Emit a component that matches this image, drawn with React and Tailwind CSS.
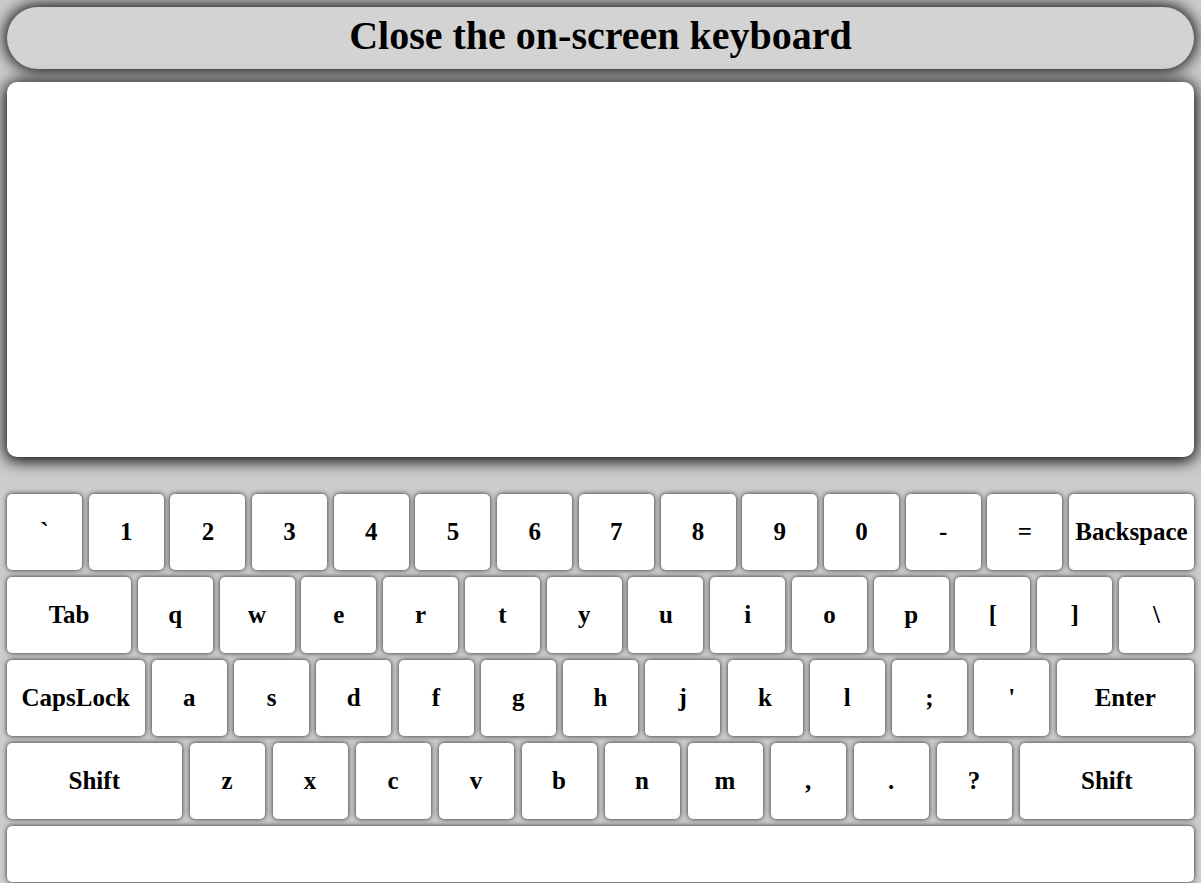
import React from 'react';

const serif = { fontFamily: '"Liberation Serif", "Times New Roman", serif' };

function Key({ label, wide }) {
  return (
    <button
      className={`${wide ? 'flex-1' : 'w-[75px] shrink-0'} h-[76px] bg-white rounded-[5px] shadow-[0_0_5px_#222] flex items-center justify-center text-[25px] font-bold text-black`}
    >
      {label}
    </button>
  );
}

const row1 = ['`', '1', '2', '3', '4', '5', '6', '7', '8', '9', '0', '-', '='];
const row2 = ['q', 'w', 'e', 'r', 't', 'y', 'u', 'i', 'o', 'p', '[', ']', '\\'];
const row3 = ['a', 's', 'd', 'f', 'g', 'h', 'j', 'k', 'l', ';', "'"];
const row4 = ['z', 'x', 'c', 'v', 'b', 'n', 'm', ',', '.', '?'];

export default function App() {
  return (
    <div className="min-h-screen bg-[#cccccc] p-[7px] pb-0 overflow-hidden" style={serif}>
      {/* header */}
      <div className="h-[62px] rounded-full bg-[#d3d3d3] shadow-[0_0_16px_2px_#000] flex items-center justify-center pb-[4px]">
        <h1 className="text-[40px] font-bold text-black leading-none">Close the on-screen keyboard</h1>
      </div>

      {/* text area */}
      <textarea
        className="block w-full mt-[13px] h-[375px] bg-white rounded-[10px] shadow-[0_2px_16px_2px_#000] resize-none outline-none border-0 p-2 text-[20px]"
      />

      {/* keyboard */}
      <div className="mt-[37px] flex flex-col gap-[7px]">
        <div className="flex gap-[6.7px]">
          {row1.map((k) => <Key key={k} label={k} />)}
          <Key label="Backspace" wide />
        </div>
        <div className="flex gap-[6.77px]">
          <Key label="Tab" wide />
          {row2.map((k) => <Key key={k} label={k} />)}
        </div>
        <div className="flex gap-[7.25px]">
          <Key label="CapsLock" wide />
          {row3.map((k) => <Key key={k} label={k} />)}
          <Key label="Enter" wide />
        </div>
        <div className="flex gap-[8px]">
          <Key label="Shift" wide />
          {row4.map((k) => <Key key={k} label={k} />)}
          <Key label="Shift" wide />
        </div>
        <div className="flex">
          <button className="flex-1 h-[56px] bg-white rounded-[5px] shadow-[0_0_5px_#222]" />
        </div>
      </div>
    </div>
  );
}
